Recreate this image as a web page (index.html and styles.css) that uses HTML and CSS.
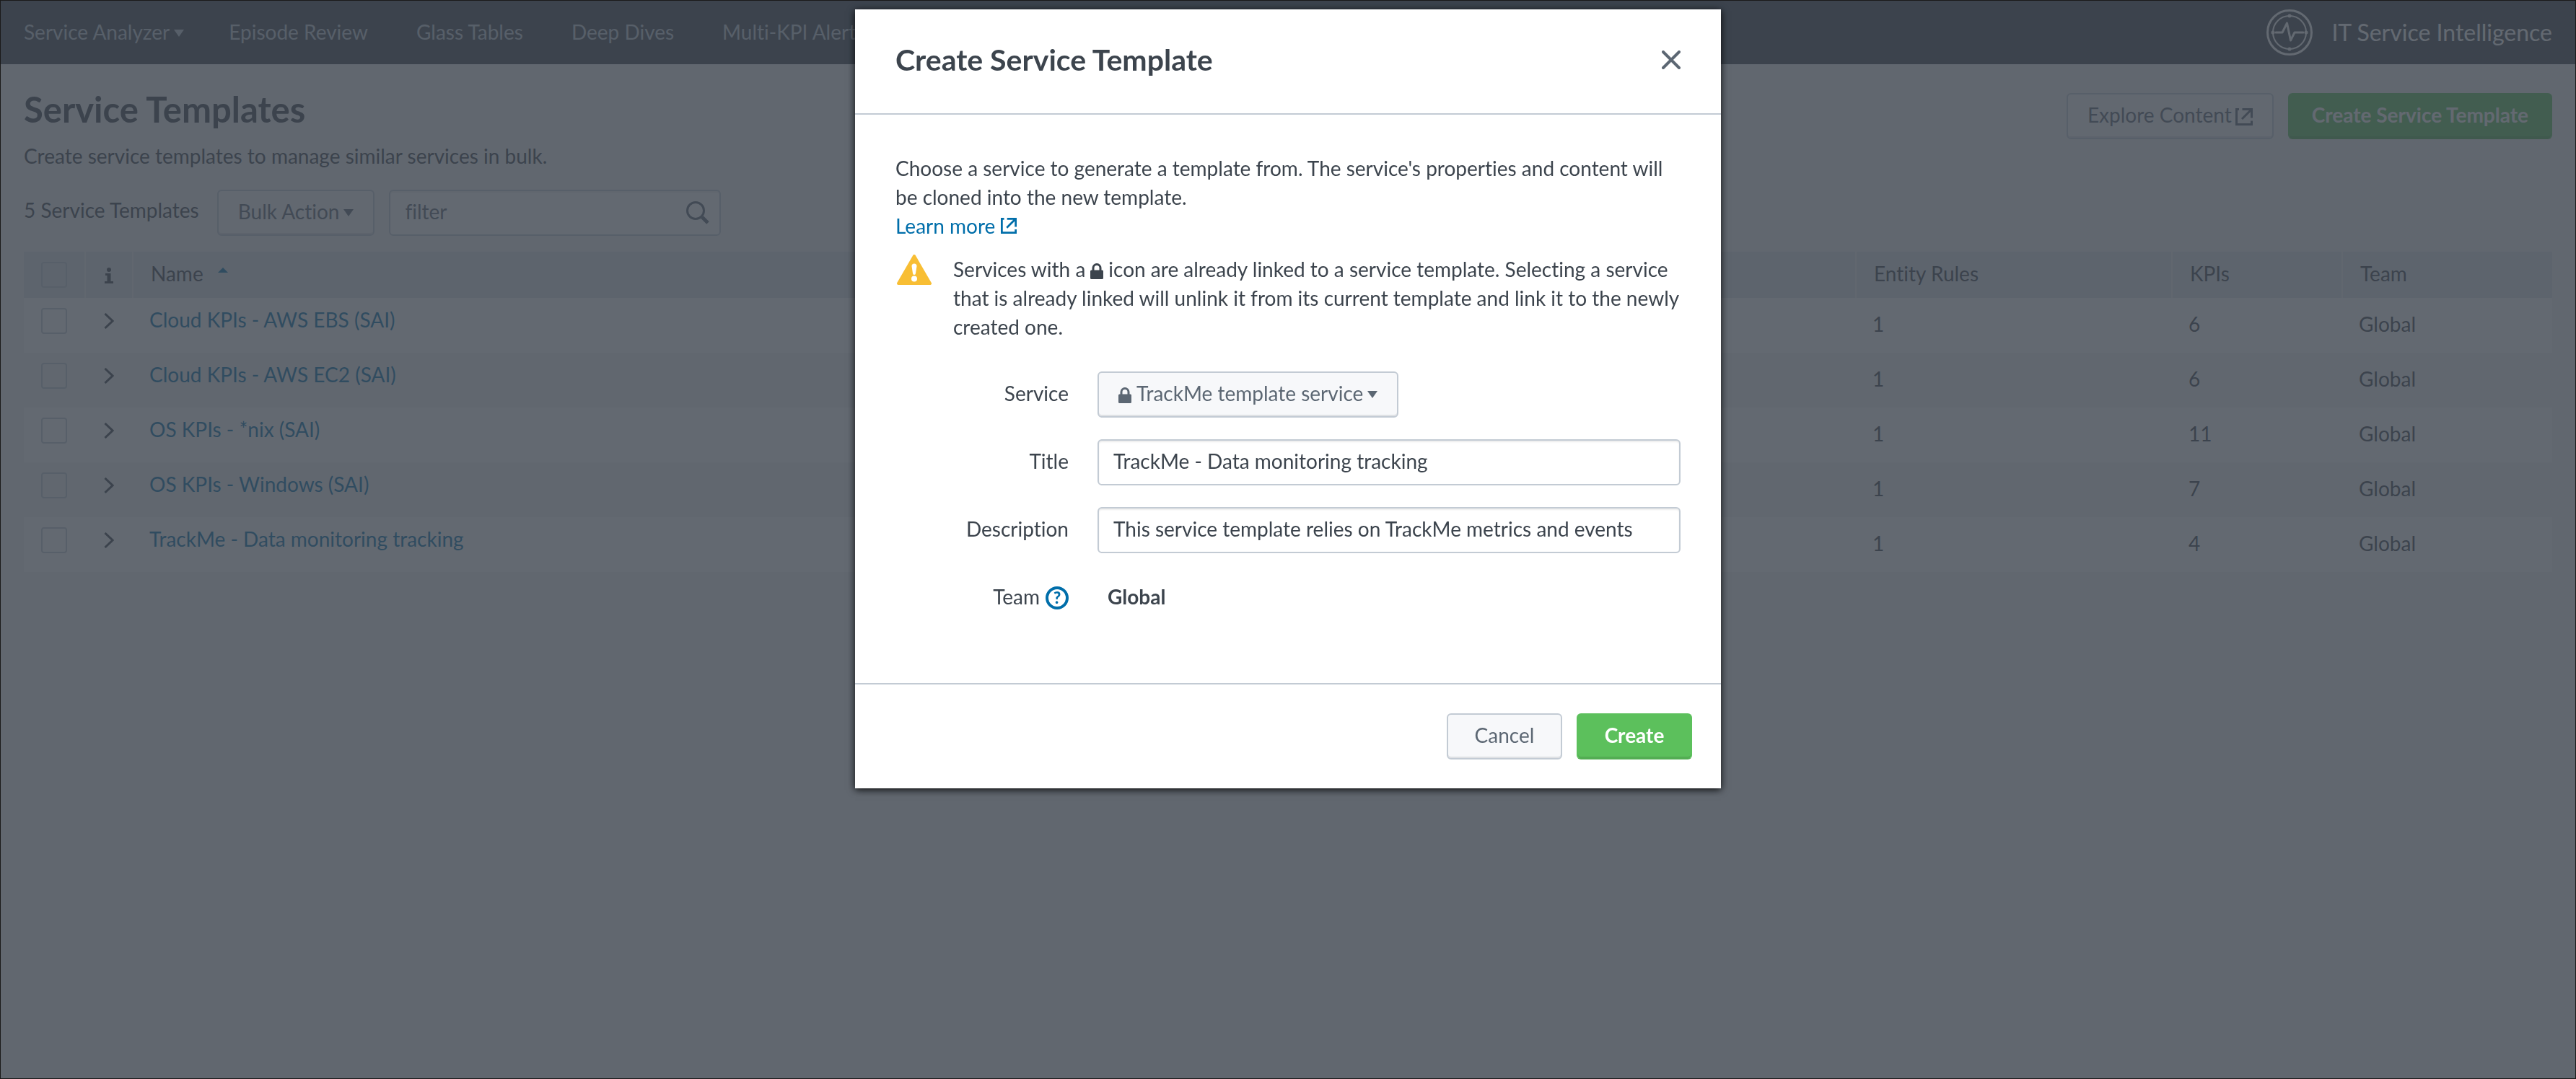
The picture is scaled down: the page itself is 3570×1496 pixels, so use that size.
FILE: index.html
```html
<!DOCTYPE html>
<html lang="en">
<head>
<meta charset="utf-8">
<title>Service Templates - IT Service Intelligence</title>
<link rel="stylesheet" href="styles.css">
</head>
<body>
<svg width="0" height="0" class="sprite" aria-hidden="true">
  <symbol id="icon-external" viewBox="0 0 24 24">
    <path d="M5 1.500H1.500V22.500H22.500V17.500M9.500 1.500H22.500V13.500M22 2L9 15" fill="none" stroke="currentColor" stroke-width="3"/>
  </symbol>
  <symbol id="icon-lock" viewBox="0 0 18 22">
    <path d="M0 11a1.500 1.500 0 0 1 1.500-1.500h15A1.500 1.500 0 0 1 18 11v9.500a1.500 1.500 0 0 1-1.500 1.500h-15A1.500 1.500 0 0 1 0 20.500z" fill="currentColor"/>
    <path d="M4 11V6.500a5 5 0 0 1 10 0V11" fill="none" stroke="currentColor" stroke-width="3"/>
  </symbol>
  <symbol id="icon-caret" viewBox="0 0 14 10">
    <path d="M0 0H14L7 10z" fill="currentColor"/>
  </symbol>
  <symbol id="icon-chevron" viewBox="0 0 14 22">
    <path d="M1.500 1L12 11L1.500 21" fill="none" stroke="currentColor" stroke-width="3"/>
  </symbol>
</svg>

<div class="app">
  <header class="topbar">
    <nav class="nav">
      <a class="nav-link" href="#">Service Analyzer<svg class="caret" aria-hidden="true"><use href="#icon-caret"/></svg></a>
      <a class="nav-link" href="#">Episode Review</a>
      <a class="nav-link" href="#">Glass Tables</a>
      <a class="nav-link" href="#">Deep Dives</a>
      <a class="nav-link" href="#">Multi-KPI Alerts</a>
    </nav>
    <a class="brand" href="#">
      <svg class="brand-logo" viewBox="0 0 64 64" fill="none" stroke="currentColor" aria-hidden="true">
        <circle cx="32" cy="32" r="30.500" stroke-width="3"/>
        <circle cx="32" cy="32" r="23" stroke-width="2"/>
        <path d="M13 32H22L28.500 19L33.500 43L39 32H51" stroke-width="3" stroke-linecap="round" stroke-linejoin="round"/>
        <g fill="currentColor" stroke="none">
          <circle cx="32" cy="9" r="2.500"/><circle cx="32" cy="55" r="2.500"/>
          <circle cx="9" cy="32" r="2.500"/><circle cx="55" cy="32" r="2.500"/>
        </g>
      </svg>
      <span>IT Service Intelligence</span>
    </a>
  </header>

  <main class="page">
    <div class="page-head">
      <div>
        <h1 class="page-title">Service Templates</h1>
        <p class="page-sub">Create service templates to manage similar services in bulk.</p>
      </div>
      <div class="page-actions">
        <button class="btn" type="button">Explore Content<svg class="external" aria-hidden="true"><use href="#icon-external"/></svg></button>
        <button class="btn btn-primary" type="button">Create Service Template</button>
      </div>
    </div>

    <div class="toolbar">
      <span class="count">5 Service Templates</span>
      <button class="btn" type="button" aria-haspopup="true">Bulk Action<svg class="caret" aria-hidden="true"><use href="#icon-caret"/></svg></button>
      <div class="search">
        <input class="field" type="text" placeholder="filter" aria-label="filter">
        <svg class="search-icon" viewBox="0 0 32 32" fill="none" stroke="currentColor" aria-hidden="true">
          <circle cx="13" cy="13" r="11.500" stroke-width="3"/>
          <path d="M22 22L30 30" stroke-width="5"/>
        </svg>
      </div>
    </div>

    <table class="grid">
      <colgroup>
        <col class="col-check"><col class="col-info"><col>
        <col class="col-rules"><col class="col-kpis"><col class="col-team">
      </colgroup>
      <thead>
        <tr>
          <th class="mid"><input class="check" type="checkbox" aria-label="Select all"></th>
          <th class="mid">
            <svg class="info" viewBox="0 0 12 22" aria-label="Info"><path d="M6 0a3 3 0 1 1 0 6a3 3 0 0 1 0-6zM1 8h7.500v11H12v3H0v-3h3.500v-8H1z" fill="currentColor"/></svg>
          </th>
          <th>Name<svg class="sort" viewBox="0 0 14 7" aria-hidden="true"><path d="M0 7L7 0L14 7z" fill="currentColor"/></svg></th>
          <th>Entity Rules</th>
          <th>KPIs</th>
          <th>Team</th>
        </tr>
      </thead>
      <tbody>
        <tr>
          <td class="mid"><input class="check" type="checkbox" aria-label="Select Cloud KPIs - AWS EBS (SAI)"></td>
          <td class="mid"><button class="expand" type="button" aria-label="Expand"><svg><use href="#icon-chevron"/></svg></button></td>
          <td class="name"><a href="#">Cloud KPIs - AWS EBS (SAI)</a></td>
          <td>1</td><td>6</td><td>Global</td>
        </tr>
        <tr>
          <td class="mid"><input class="check" type="checkbox" aria-label="Select Cloud KPIs - AWS EC2 (SAI)"></td>
          <td class="mid"><button class="expand" type="button" aria-label="Expand"><svg><use href="#icon-chevron"/></svg></button></td>
          <td class="name"><a href="#">Cloud KPIs - AWS EC2 (SAI)</a></td>
          <td>1</td><td>6</td><td>Global</td>
        </tr>
        <tr>
          <td class="mid"><input class="check" type="checkbox" aria-label="Select OS KPIs - *nix (SAI)"></td>
          <td class="mid"><button class="expand" type="button" aria-label="Expand"><svg><use href="#icon-chevron"/></svg></button></td>
          <td class="name"><a href="#">OS KPIs - *nix (SAI)</a></td>
          <td>1</td><td>11</td><td>Global</td>
        </tr>
        <tr>
          <td class="mid"><input class="check" type="checkbox" aria-label="Select OS KPIs - Windows (SAI)"></td>
          <td class="mid"><button class="expand" type="button" aria-label="Expand"><svg><use href="#icon-chevron"/></svg></button></td>
          <td class="name"><a href="#">OS KPIs - Windows (SAI)</a></td>
          <td>1</td><td>7</td><td>Global</td>
        </tr>
        <tr>
          <td class="mid"><input class="check" type="checkbox" aria-label="Select TrackMe - Data monitoring tracking"></td>
          <td class="mid"><button class="expand" type="button" aria-label="Expand"><svg><use href="#icon-chevron"/></svg></button></td>
          <td class="name"><a href="#">TrackMe - Data monitoring tracking</a></td>
          <td>1</td><td>4</td><td>Global</td>
        </tr>
      </tbody>
    </table>
  </main>
</div>

<div class="backdrop">
  <section class="modal" role="dialog" aria-modal="true" aria-labelledby="modal-title">
    <header class="modal-head">
      <h2 class="modal-title" id="modal-title">Create Service Template</h2>
      <button class="close" type="button" aria-label="Close">
        <svg viewBox="0 0 26 26" fill="none" stroke="currentColor" stroke-width="4" stroke-linecap="round" aria-hidden="true"><path d="M2 2L24 24M24 2L2 24"/></svg>
      </button>
    </header>

    <form class="modal-body">
      <p class="intro">Choose a service to generate a template from. The service's properties and content will be cloned into the new template.<br><a class="learn" href="#">Learn more<svg class="external" aria-hidden="true"><use href="#icon-external"/></svg></a></p>

      <div class="warning">
        <svg class="warning-icon" viewBox="0 0 48 42" aria-hidden="true">
          <path d="M24 2L46 40H2z" fill="#f8be34" stroke="#f8be34" stroke-width="4" stroke-linejoin="round"/>
          <path d="M20.500 16a3.500 3.500 0 0 1 7 0L26 26a2 2 0 0 1-4 0z" fill="#fff"/>
          <circle cx="24" cy="33.500" r="4" fill="#fff"/>
        </svg>
        <p class="warning-text">Services with a<svg class="lock" role="img" aria-label="lock"><use href="#icon-lock"/></svg>icon are already linked to a service template. Selecting a service that is already linked will unlink it from its current template and link it to the newly created one.</p>
      </div>

      <div class="form">
        <label class="label" for="service">Service</label>
        <button class="btn form-btn" id="service" type="button" aria-haspopup="listbox"><svg class="lock" aria-hidden="true"><use href="#icon-lock"/></svg>TrackMe template service<svg class="caret" aria-hidden="true"><use href="#icon-caret"/></svg></button>

        <label class="label" for="title">Title</label>
        <input class="field" id="title" type="text" value="TrackMe - Data monitoring tracking">

        <label class="label" for="description">Description</label>
        <input class="field" id="description" type="text" value="This service template relies on TrackMe metrics and events">

        <div class="label">Team<button class="help" type="button" aria-label="Help on Team">?</button></div>
        <div class="value">Global</div>
      </div>
    </form>

    <footer class="modal-foot">
      <button class="btn btn-wide" type="button">Cancel</button>
      <button class="btn btn-wide btn-primary" type="button">Create</button>
    </footer>
  </section>
</div>
</body>
</html>
```
FILE: styles.css
```css
:root {
  --ink: #3c444d;
  --muted: #5c6773;
  --line: #c3cbd4;
  --page: #f2f4f5;
  --link: #006eaa;
  --green: #5cc05c;
}

* { box-sizing: border-box; }

body, h1, h2, p { margin: 0; }

body, button, input {
  font-family: Lato, "Liberation Sans", sans-serif;
  font-size: 28px;
  line-height: 40px;
  font-variant-ligatures: none;
  color: var(--ink);
}

a { color: var(--link); text-decoration: none; }

.sprite { position: absolute; }

.app {
  min-height: 100vh;
  border: 1px solid #1a1a1a;
  background: var(--page);
}

/* Top bar */

.topbar {
  display: flex;
  align-items: center;
  justify-content: space-between;
  height: 88px;
  padding: 0 32px;
  background: var(--ink);
}

.nav { display: flex; gap: 67px; }

.nav-link { color: var(--line); padding-bottom: 2px; }
.nav-link:first-child { margin-right: -5px; }

.brand {
  display: flex;
  align-items: center;
  gap: 26px;
  font-size: 32px;
  color: #fff;
}

.brand-logo { width: 64px; height: 64px; }

.caret { width: 14px; height: 10px; margin-left: 6px; vertical-align: 4px; }

/* Page heading and toolbar */

.page { padding: 32px 32px; }

.page-head { display: flex; justify-content: space-between; }

.page-title { font-size: 49px; line-height: 60px; font-weight: 700; }
.page-sub { margin-top: 15px; }

.page-actions {
  display: flex;
  align-items: flex-start;
  gap: 20px;
  padding-top: 8px;
}

.toolbar { display: flex; gap: 20px; margin-top: 27px; }

.count { margin-right: 5px; line-height: 56px; }

.btn {
  height: 64px;
  padding: 0 27px 4px;
  border: 2px solid var(--line);
  border-radius: 6px;
  background: #f7f8fa;
  box-shadow: inset 0 -2px #dfe1e4;
  line-height: 56px;
  color: var(--muted);
  white-space: nowrap;
}

.btn-primary {
  padding: 0 31px 4px;
  border-color: var(--green);
  border-bottom-color: #53ad53;
  background: var(--green);
  box-shadow: inset 0 -2px #53ad53;
  font-weight: 700;
  color: #fff;
}

.btn-wide { width: 160px; }

.field {
  width: 100%;
  height: 64px;
  padding: 0 20px 4px;
  border: 2px solid var(--line);
  border-radius: 6px;
  background: #fff;
  box-shadow: inset 0 2px 2px rgba(0, 0, 0, 0.08);
}

.field::placeholder { color: var(--muted); opacity: 1; }

.search { position: relative; width: 460px; }

.search-icon {
  position: absolute;
  top: 16px;
  right: 16px;
  width: 32px;
  height: 32px;
  color: var(--muted);
}

.external { width: 24px; height: 24px; margin-left: 5px; vertical-align: -4px; }

/* Template list */

.grid {
  width: 100%;
  margin-top: 22px;
  border-collapse: collapse;
  table-layout: fixed;
}

.col-check { width: 86px; }
.col-info { width: 66px; }
.col-rules { width: 438px; }
.col-kpis { width: 236px; }
.col-team { width: 290px; }

.grid th {
  height: 64px;
  padding: 0 24px 4px;
  background: linear-gradient(var(--page), var(--page)) right / 2px 100% no-repeat #e1e6eb;
  font-weight: 400;
  text-align: left;
}

.grid th:last-child { background: #e1e6eb; }

.grid td {
  height: 76px;
  padding: 16px 22px 0;
  vertical-align: top;
}

.grid tbody tr:nth-child(odd) { background: #fff; }

.grid .name { padding-top: 10px; }

.grid .mid { padding: 14px 2px 0 0; text-align: center; vertical-align: top; line-height: 0; }

.check {
  appearance: none;
  width: 36px;
  height: 36px;
  margin: 0;
  border: 2px solid var(--line);
  border-radius: 4px;
}

.info { width: 12px; height: 22px; margin-top: 8px; }

.sort { width: 14px; height: 7px; margin-left: 20px; vertical-align: 12px; color: var(--link); }

.expand {
  display: inline-grid;
  place-items: center;
  width: 36px;
  height: 36px;
  padding: 0;
  border: 0;
  background: none;
}

.expand svg { width: 14px; height: 22px; }

/* Dialog */

.backdrop {
  position: fixed;
  inset: 1px;
  display: flex;
  align-items: flex-start;
  justify-content: center;
  padding-top: 12px;
  background: rgba(60, 68, 77, 0.8);
}

.modal {
  width: 1200px;
  background: #fff;
  box-shadow: 0 2px 10px rgba(0, 0, 0, 0.9);
}

.modal-head {
  display: flex;
  justify-content: space-between;
  align-items: center;
  padding: 46px 56px 50px;
  border-bottom: 2px solid var(--line);
}

.modal-title { font-size: 41px; line-height: 48px; font-weight: 700; }

.close {
  padding: 0;
  border: 0;
  background: none;
  color: var(--muted);
}

.close svg { display: block; width: 26px; height: 26px; }

.modal-body { padding: 54px 56px 86px; }

.learn .external { width: 22px; height: 22px; vertical-align: 0; margin-left: 8px; }

.warning {
  display: grid;
  grid-template-columns: 52px 1fr;
  gap: 28px;
  margin-top: 20px;
}

.warning-icon { width: 48px; height: 42px; margin-left: 2px; }

.lock { width: 18px; height: 22px; margin: 0 7px; vertical-align: -3px; }

.form {
  display: grid;
  grid-template-columns: 240px 1fr;
  gap: 30px 40px;
  margin-top: 42px;
}

.label { text-align: right; line-height: 60px; }

.value { height: 64px; padding-left: 14px; line-height: 60px; font-weight: 700; }

.form-btn { justify-self: start; }
.form-btn .lock { margin-left: 0; }

.help {
  width: 32px;
  height: 32px;
  margin-left: 8px;
  padding: 0;
  border: 4px solid var(--link);
  border-radius: 50%;
  background: none;
  font-size: 22px;
  line-height: 24px;
  font-weight: 900;
  color: var(--link);
  vertical-align: 1px;
}

.modal-foot {
  display: flex;
  justify-content: flex-end;
  gap: 20px;
  padding: 40px;
  border-top: 2px solid var(--line);
}
```
